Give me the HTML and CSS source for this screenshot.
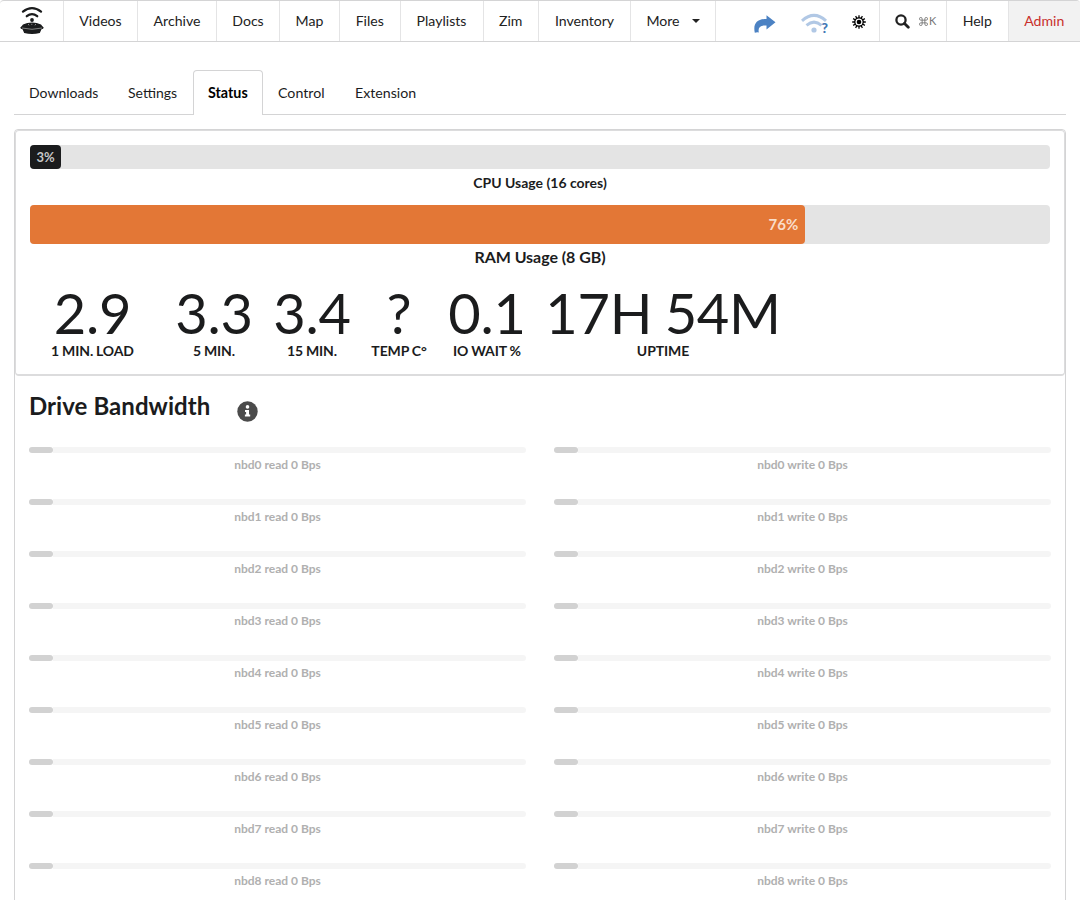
FILE: index.html
```html
<!DOCTYPE html>
<html lang="en">
<head>
<meta charset="utf-8">
<title>Status</title>
<link rel="stylesheet" href="styles.css">
</head>
<body>
<nav class="menu">
  <a class="item logo" style="width:63px"><svg width="26" height="30" viewBox="0 0 26 30"><g fill="none" stroke="#1b1c1d" stroke-width="2.3" stroke-linecap="round"><path d="M4 5.6Q13-1.4 22 5.6"/><path d="M7.8 10.2Q13 6 18.2 10.2"/></g><circle cx="13" cy="14" r="1.9" fill="#1b1c1d"/><path d="M1.3 21.5Q3 20 4 18.4Q8 16.6 13 16.6Q18 16.6 22 18.4Q23 20 24.7 21.5Q24.5 23 22.5 23.2L20.8 27Q13 29.2 5.2 27L3.5 23.2Q1.5 23 1.3 21.5Z" fill="#1b1c1d"/><path d="M3 22Q13 24.6 23 22" fill="none" stroke="#aaa" stroke-width=".7"/><path d="M9 18.2l1.2 1M12.8 17.8v1M17 18.2l-1.2 1" stroke="#bbb" stroke-width=".8"/></svg></a>
  <a class="item" style="width:73px">Videos</a>
  <a class="item" style="width:78px">Archive</a>
  <a class="item" style="width:62px">Docs</a>
  <a class="item" style="width:59px">Map</a>
  <a class="item" style="width:59.5px">Files</a>
  <a class="item" style="width:82px">Playlists</a>
  <a class="item" style="width:54.5px">Zim</a>
  <a class="item" style="width:91px">Inventory</a>
  <a class="item more" style="width:84px">More<span class="caret"></span></a>
  <div class="item tools">
    <svg class="share" width="22" height="20" viewBox="0 0 22 20"><path d="M.8 18.8C-1.2 9.5 3.2 5 12.5 5V1.2L21.5 8.3L12.5 15.4V11.4C6.2 11.2 3.8 13.3 4.8 18.4Q2.8 17.8.8 18.8Z" fill="#4c82c3"/></svg>
    <svg class="wifi" width="30" height="22" viewBox="0 0 30 22"><g fill="none" stroke="#b1c8e5" stroke-width="3"><path d="M1 7.8Q13-3 25 7.8"/><path d="M5.5 12.3Q13 6 20.5 12.3"/></g><circle cx="13" cy="17" r="2.6" fill="#b1c8e5"/><text x="20.5" y="20" class="query">?</text></svg>
    <svg class="sun" width="14" height="14" viewBox="-7 -7 14 14"><circle r="4.2" fill="none" stroke="#000" stroke-width="1.3"/><circle r="2.3"/><g stroke="#000" stroke-width="1.3"><path id="ray" d="M0-6.8V-4M0 4V6.8"/><use href="#ray" transform="rotate(30)"/><use href="#ray" transform="rotate(60)"/><use href="#ray" transform="rotate(90)"/><use href="#ray" transform="rotate(120)"/><use href="#ray" transform="rotate(150)"/></g></svg>
  </div>
  <a class="item search"><svg width="15" height="15" viewBox="0 0 15 15" fill="none" stroke="#222"><circle cx="6" cy="6" r="4.6" stroke-width="2.3"/><path d="M9.5 9.5L13.3 13.3" stroke-width="2.8" stroke-linecap="round"/></svg><span class="key"><svg width="9" height="9" viewBox="0 0 10 10" fill="none" stroke="#777" stroke-width="1"><path d="M3.5 3.5H2A1.5 1.5 0 1 1 3.5 2V8A1.5 1.5 0 1 1 2 6.5H8A1.5 1.5 0 1 1 6.5 8V2A1.5 1.5 0 1 1 8 3.5Z"/></svg>K</span></a>
  <a class="item" style="width:60.5px">Help</a>
  <a class="item admin">Admin</a>
</nav>
<main>
  <div class="tabs"><a style="width:99px">Downloads</a><a style="width:80px">Settings</a><a class="active" style="width:70px">Status</a><a style="width:77px">Control</a><a>Extension</a></div>
  <section class="panel">
    <div class="usage">
      <div class="bar cpu"><div class="fill" style="width:3%">3%</div></div>
      <div class="caption">CPU Usage (16 cores)</div>
      <div class="bar ram"><div class="fill" style="width:76%">76%</div></div>
      <div class="caption large">RAM Usage (8 GB)</div>
      <div class="stats">
        <div class="stat" style="width:125px"><b>2.9</b><span>1 MIN. LOAD</span></div>
        <div class="stat" style="width:118px"><b>3.3</b><span>5 MIN.</span></div>
        <div class="stat" style="width:78px"><b>3.4</b><span>15 MIN.</span></div>
        <div class="stat" style="width:96px"><b>?</b><span>TEMP C°</span></div>
        <div class="stat" style="width:80px"><b>0.1</b><span>IO WAIT %</span></div>
        <div class="stat" style="width:272px"><b>17H 54M</b><span>UPTIME</span></div>
      </div>
    </div>
    <h2>Drive Bandwidth <svg width="21" height="21" viewBox="0 0 21 21"><circle cx="10.5" cy="10.5" r="10.2" fill="#4b4b4b"/><circle cx="10.5" cy="5.9" r="1.8" fill="#fff"/><path d="M8 9H12V13.6H13.2V15.5H7.9V13.6H9.1V10.9H8Z" fill="#fff"/></svg></h2>
    <div class="drives">
      <div class="drive"><i></i><p>nbd0 read 0 Bps</p></div><div class="drive"><i></i><p>nbd0 write 0 Bps</p></div>
      <div class="drive"><i></i><p>nbd1 read 0 Bps</p></div><div class="drive"><i></i><p>nbd1 write 0 Bps</p></div>
      <div class="drive"><i></i><p>nbd2 read 0 Bps</p></div><div class="drive"><i></i><p>nbd2 write 0 Bps</p></div>
      <div class="drive"><i></i><p>nbd3 read 0 Bps</p></div><div class="drive"><i></i><p>nbd3 write 0 Bps</p></div>
      <div class="drive"><i></i><p>nbd4 read 0 Bps</p></div><div class="drive"><i></i><p>nbd4 write 0 Bps</p></div>
      <div class="drive"><i></i><p>nbd5 read 0 Bps</p></div><div class="drive"><i></i><p>nbd5 write 0 Bps</p></div>
      <div class="drive"><i></i><p>nbd6 read 0 Bps</p></div><div class="drive"><i></i><p>nbd6 write 0 Bps</p></div>
      <div class="drive"><i></i><p>nbd7 read 0 Bps</p></div><div class="drive"><i></i><p>nbd7 write 0 Bps</p></div>
      <div class="drive"><i></i><p>nbd8 read 0 Bps</p></div><div class="drive"><i></i><p>nbd8 write 0 Bps</p></div>
    </div>
  </section>
</main>
</body>
</html>
```
FILE: styles.css
```css
* { box-sizing: border-box; }
body { margin: 0; height: 900px; overflow: hidden; background: #fff; color: #1b1c1d; font: 14px/18px Lato, sans-serif; }
svg { display: block; flex: none; }
.menu { display: flex; height: 42px; border: 1px solid #d4d4d5; border-width: 1px 0; border-radius: 4px 4px 0 0; overflow: hidden; }
.item { display: flex; align-items: center; justify-content: center; flex: none; box-sizing: content-box; border-right: 1px solid #e4e4e5; color: #222; font-size: 14.1px; }
.more { gap: 12px; }
.caret { border: 4px solid transparent; border-top: 4px solid #222; border-bottom: 0; }
.tools { width: 162.5px; justify-content: flex-start; padding: 0; }
.share { margin: 5px 0 0 38px; }
.wifi { margin: 6px 0 0 24.5px; }
.sun { margin: 2px 0 0 21.5px; }
.query { font: 900 14px Lato, sans-serif; fill: #4377b5; }
.search { width: 51px; padding-left: 15.5px; justify-content: flex-start; gap: 9px; }
.key { display: flex; align-items: center; gap: 1px; font-size: 11px; color: #777; }
.admin { flex: 1; background: #f2f2f2; color: #c9302c; border: 0; }
main { padding: 28px 14px 0; }
.tabs { display: flex; height: 45px; border-bottom: 1px solid #d4d4d5; }
.tabs a { height: 45px; padding: 14px 0 0 15px; }
.tabs .active { padding: 13px 0 0 14px; border: 1px solid #d4d4d5; border-bottom: 0; border-radius: 4px 4px 0 0; background: #fff; font-weight: 700; font-size: 14.3px; color: #000; }
.tabs .active ~ a { font-size: 14.2px; }
.panel { margin-top: 14px; height: 800px; border: 1px solid #d4d4d5; border-radius: 4px; }
.usage { height: 246px; padding: 14px; border: 1px solid #dcdcdd; border-bottom-width: 2px; border-radius: 4px; }
.bar { background: #e4e4e4; border-radius: 4px; }
.bar .fill { height: 100%; display: flex; align-items: center; justify-content: flex-end; padding-right: 7px; border-radius: 4px; color: #c6c6c6; font-weight: 700; }
.cpu { height: 24px; }
.cpu .fill { background: #1b1c1d; font-size: 13px; padding-right: 6px; }
.ram { height: 39.5px; margin-top: 12.5px; }
.ram .fill { background: #e37736; color: #f9ddca; font-size: 15px; padding-bottom: 1px; }
.caption { margin-top: 5px; text-align: center; font-weight: 700; }
.large { margin-top: 4px; font-size: 16px; letter-spacing: -.05px; }
.stats { display: flex; margin-top: 19px; }
.stat { display: flex; flex-direction: column; align-items: center; white-space: nowrap; font-weight: 700; }
.stat b { font-size: 56px; line-height: 56px; font-weight: 400; letter-spacing: -.3px; word-spacing: -1.5px; }
.stat span { margin-top: 1px; letter-spacing: -.1px; word-spacing: -.4px; }
h2 { display: flex; align-items: center; gap: 27px; height: 28px; margin: 16px 14px 0; font-size: 24px; line-height: 28px; letter-spacing: .06px; }
h2 svg { margin-top: 10px; }
.drives { display: grid; grid-template-columns: 497px 497px; column-gap: 28px; padding: 26.5px 14px 0; }
.drive { height: 52px; }
.drive i { display: block; height: 6px; border-radius: 3px; background: linear-gradient(90deg, transparent 24px, #f5f5f5 24px); }
.drive i::before { content: ""; display: block; width: 24px; height: 6px; border-radius: 3px; background: #d2d2d2; }
.drive p { margin: 3px 0 0; text-align: center; font-size: 12px; line-height: 18px; font-weight: 700; color: #b0b0b0; }
```
